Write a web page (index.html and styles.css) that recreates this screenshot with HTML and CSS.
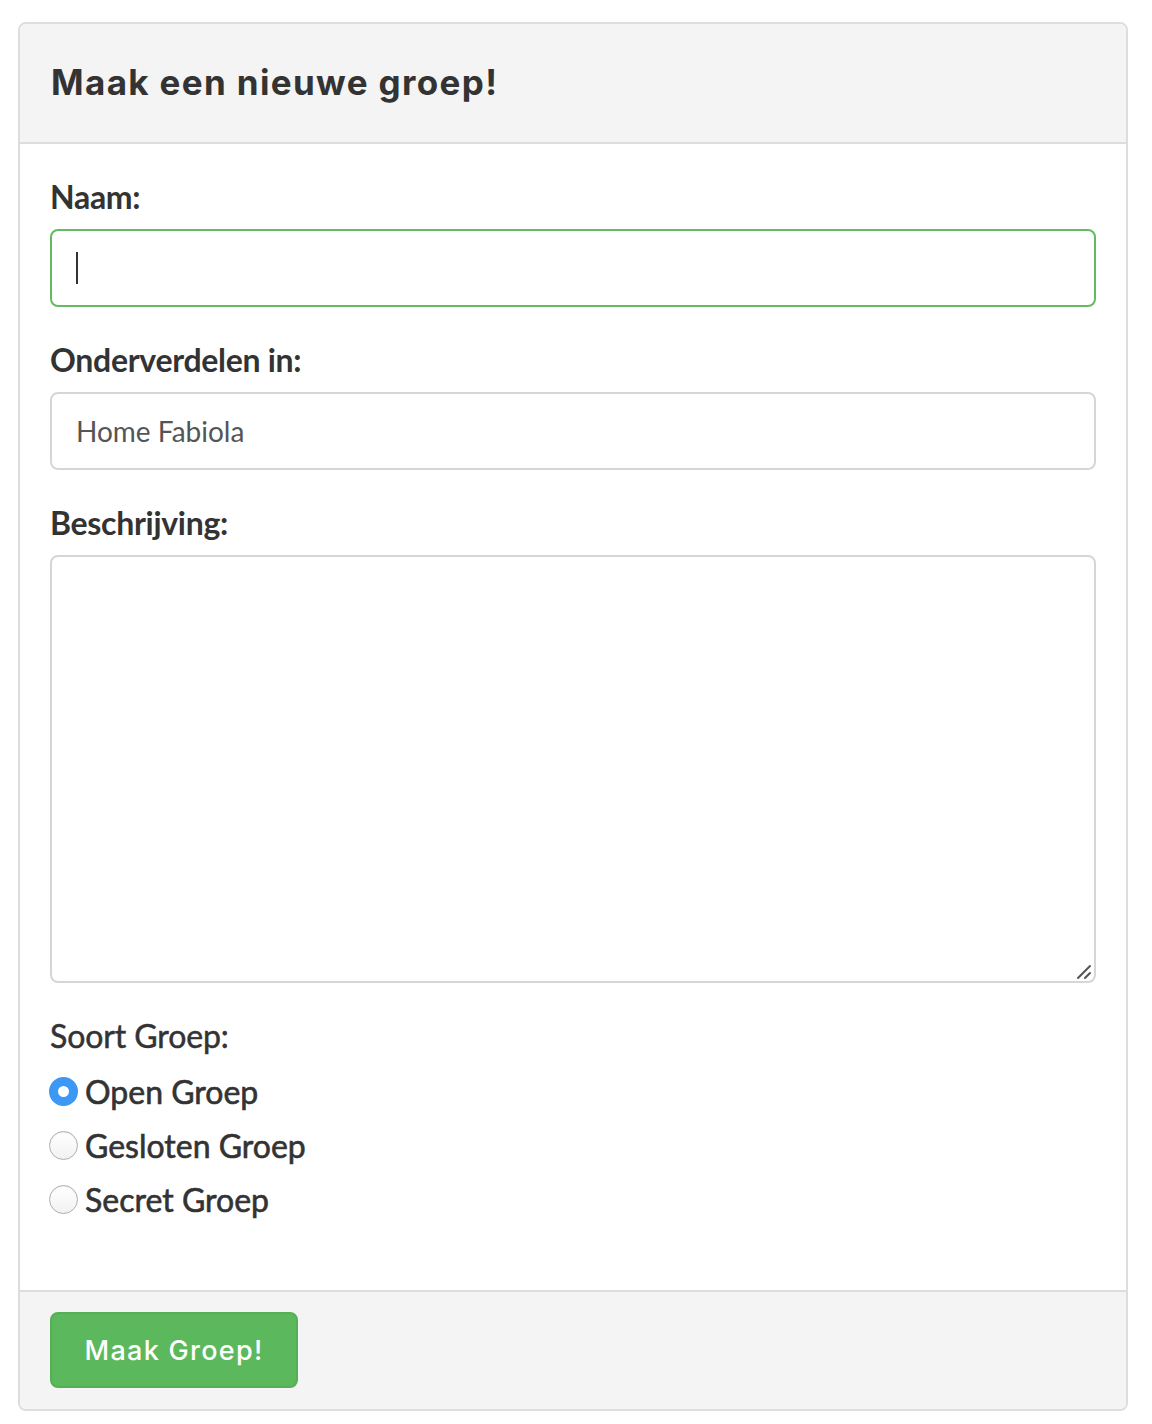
FILE: index.html
```html
<!DOCTYPE html>
<html lang="nl">
<head>
<meta charset="utf-8">
<title>Maak een nieuwe groep!</title>
<link rel="stylesheet" href="styles.css">
</head>
<body>
<div class="panel">
  <div class="panel-heading">
    <h3 class="panel-title">Maak een nieuwe groep!</h3>
  </div>
  <form class="panel-body">
    <div class="form-group">
      <label class="label" for="naam">Naam:</label>
      <div class="field-wrap">
        <input id="naam" class="form-control focused" type="text">
        <span class="caret"></span>
      </div>
    </div>
    <div class="form-group">
      <label class="label" for="ouder">Onderverdelen in:</label>
      <input id="ouder" class="form-control" type="text" value="Home Fabiola" readonly>
    </div>
    <div class="form-group">
      <label class="label" for="beschrijving">Beschrijving:</label>
      <div class="field-wrap">
        <textarea id="beschrijving" class="form-control textarea"></textarea>
        <svg class="resizer" width="16" height="16" viewBox="0 0 16 16" aria-hidden="true">
          <path d="M2 14 L14 2 M9 14 L14 9" stroke="#555" stroke-width="2" stroke-linecap="round" fill="none"/>
        </svg>
      </div>
    </div>
    <div class="radio-group">
      <div class="radio-title">Soort Groep:</div>
      <label class="radio"><input type="radio" name="soort" checked><span>Open Groep</span></label>
      <label class="radio"><input type="radio" name="soort"><span>Gesloten Groep</span></label>
      <label class="radio"><input type="radio" name="soort"><span>Secret Groep</span></label>
    </div>
  </form>
  <div class="panel-footer">
    <button class="btn" type="button">Maak Groep!</button>
  </div>
</div>
</body>
</html>
```
FILE: styles.css
```css
* { box-sizing: border-box; }
html, body { margin: 0; padding: 0; background: #fff; }
body {
  font-family: Lato, "Open Sans", sans-serif;
  color: #333;
  padding: 22px 0 0 18px;
}
.panel {
  width: 1110px;
  border: 2px solid #dddddd;
  border-radius: 8px;
  background: #fff;
  overflow: hidden;
}
.panel-heading {
  background: #f4f4f4;
  border-bottom: 2px solid #dddddd;
  height: 120px;
  display: flex;
  align-items: center;
  padding: 0 30px 0 31px;
}
.panel-title {
  margin: 0;
  font-family: Inter, "Open Sans", sans-serif;
  font-weight: 700;
  font-size: 35px;
  letter-spacing: 1.35px;
  color: #333;
  padding-bottom: 2px;
}
.panel-body {
  padding: 33px 30px 64px 30px;
  display: flex;
  flex-direction: column;
}
.form-group { display: flex; flex-direction: column; margin-bottom: 33px; }
.label {
  font-weight: 700;
  font-size: 32px;
  line-height: 40px;
  letter-spacing: -0.3px;
  color: #333;
  margin-bottom: 12px;
}
.field-wrap { position: relative; }
.form-control {
  display: block;
  width: 100%;
  height: 78px;
  border: 2px solid #d6d6d6;
  border-radius: 8px;
  padding: 0 24px;
  font-family: Lato, sans-serif;
  font-size: 28px;
  color: #555;
  background: #fff;
  outline: none;
}
.form-control.focused { border-color: #62bb5f; }
.caret {
  position: absolute;
  left: 26px;
  top: 23px;
  width: 2px;
  height: 32px;
  background: #333;
}
.textarea {
  height: 428px;
  resize: none;
  padding: 16px 24px;
}
.resizer {
  position: absolute;
  right: 4px;
  bottom: 3px;
}
.radio-group { display: flex; flex-direction: column; }
.radio-title {
  font-size: 32px;
  line-height: 40px;
  font-weight: 400;
  letter-spacing: -0.1px;
  -webkit-text-stroke: 0.5px #333;
  color: #333;
  margin-bottom: 8px;
}
.radio {
  display: flex;
  align-items: center;
  height: 54px;
  margin-left: -2px;
  font-size: 32px;
  font-weight: 400;
  letter-spacing: 0;
  -webkit-text-stroke: 0.6px #333;
  color: #333;
}
.radio input {
  appearance: none;
  -webkit-appearance: none;
  margin: 0 7px 0 1px;
  width: 29px;
  height: 29px;
  border-radius: 50%;
  border: 1.5px solid #aeaeae;
  background: linear-gradient(#fff, #f2f2f2);
  box-shadow: inset 0 1px 1px rgba(0,0,0,0.06);
}
.radio input:checked {
  border: 9.5px solid #3d97f5;
  background: #fff;
  box-shadow: none;
}
.panel-footer {
  background: #f4f4f4;
  border-top: 2px solid #dddddd;
  padding: 20px 30px 21px 30px;
}
.btn {
  display: block;
  width: 248px;
  height: 76px;
  background: #5cb85c;
  border: 2px solid #55b055;
  border-radius: 8px;
  color: #fff;
  font-family: Inter, "Open Sans", sans-serif;
  font-weight: 500;
  font-size: 27px;
  letter-spacing: 1.3px;
  cursor: pointer;
}
```
